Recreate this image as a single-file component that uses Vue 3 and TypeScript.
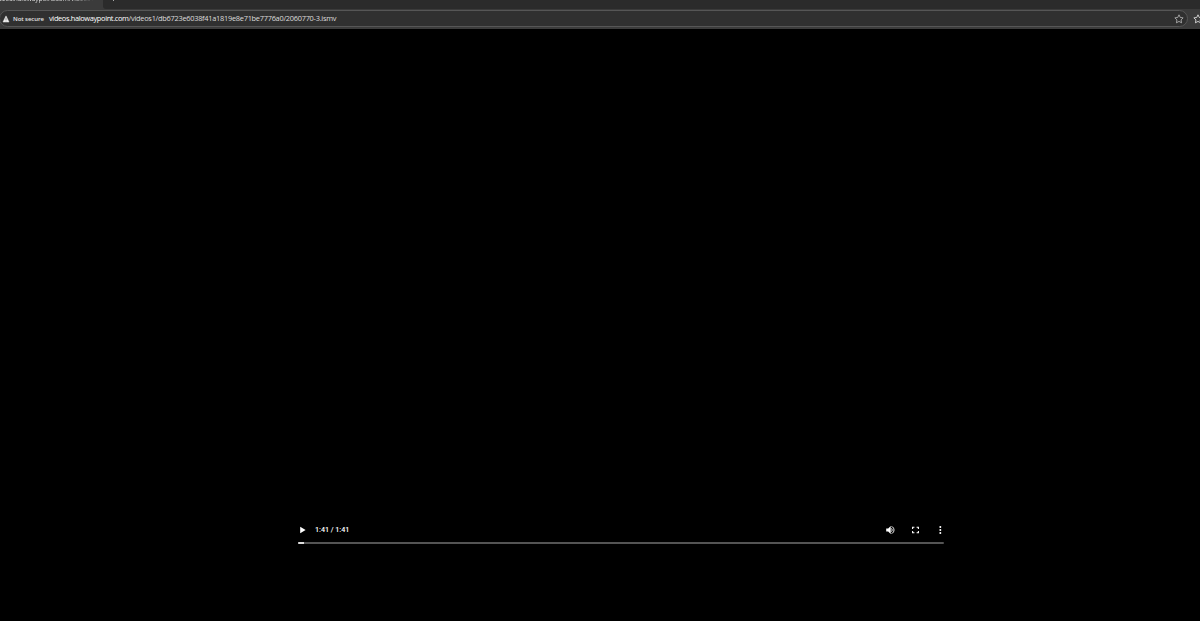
<script setup lang="ts">
const tabTitle = 'videos.halowaypoint.com/videos1'
const host = 'videos.halowaypoint.com'
const path = '/videos1/db6723e6038f41a1819e8e71be7776a0/2060770-3.ismv'
const time = '1:41 / 1:41'
const progress = 1
</script>

<template>
  <div class="window">
    <header class="tabs">
      <div class="tab"><span>{{ tabTitle }}</span></div>
      <div class="rest"><i class="plus"></i></div>
    </header>
    <div class="toolbar">
      <div class="address">
        <svg class="warn" viewBox="0 0 8 8"><path d="M4 .9 7 7H1Z" fill="#eee" stroke="#eee" stroke-width=".5" stroke-linejoin="round" /><path d="M4 3v2M4 5.7v.6" stroke="#555" stroke-width=".6" /></svg>
        <span class="secure">Not secure</span>
        <span class="url"><span class="host">{{ host }}</span>{{ path }}</span>
        <svg class="star" viewBox="0 0 10 10"><path d="m5 .8 1.25 2.65 2.9.4-2.1 2.05.5 2.9L5 7.4 2.45 8.8l.5-2.9L.85 3.85l2.9-.4Z" /></svg>
      </div>
      <svg class="favorites" viewBox="0 0 10 10"><path d="m5 .8 1.25 2.65 2.9.4-2.1 2.05.5 2.9L5 7.4 2.45 8.8l.5-2.9L.85 3.85l2.9-.4Z" /></svg>
    </div>
    <main class="stage">
      <section class="player">
        <div class="controls">
          <svg class="play" viewBox="0 0 6 8"><path d="M.2.8 5.6 4 .2 7.2Z" fill="#fff" /></svg>
          <span class="time">{{ time }}</span>
          <div class="actions">
            <svg viewBox="0 0 10 10"><path d="M1.2 3.5h2L5.7 1v8L3.2 6.5h-2Z" fill="#fff" /><path d="M6.5 3.3q1.5 1.7 0 3.4M6.5 1.5c3.3.8 3.3 6.2 0 7" fill="none" stroke="#fff" stroke-width=".9" /></svg>
            <svg viewBox="0 0 10 10"><path d="M2.6 4V2.2h1.8M6.6 2.2h1.8V4M8.4 6v1.8H6.6M4.4 7.8H2.6V6" fill="none" stroke="#fff" stroke-width="1.1" /></svg>
            <svg viewBox="0 0 10 10"><g fill="#fff"><circle cx="5.3" cy="2.1" r="1" /><circle cx="5.3" cy="5" r="1" /><circle cx="5.3" cy="7.9" r="1" /></g></svg>
          </div>
        </div>
        <div class="track"><div class="fill" :style="{ width: progress + '%' }"></div></div>
      </section>
    </main>
  </div>
</template>

<style>
body { background: #000; overflow: hidden; }
</style>
<style scoped>
.window { width: 1200px; height: 621px; display: flex; flex-direction: column; background: #000; font-family: "Open Sans", "Noto Sans", sans-serif; }
.tabs { height: 9px; display: flex; background: #3b3b3b; overflow: hidden; }
.tab { width: 103px; height: 9px; overflow: hidden; color: #ddd; font-size: 6.6px; line-height: 10px; white-space: nowrap; }
.tab span { display: block; width: 110px; margin: -6px 0 0 -7px; letter-spacing: -.1px; mask-image: linear-gradient(to right, #000 70%, transparent 92%); }
.rest { flex: 1; height: 9px; background: #2b2b2b; border-bottom-left-radius: 3px; }
.plus { display: block; width: 1px; height: 1px; margin-left: 10px; background: #aaa; }
.toolbar { height: 20px; box-sizing: border-box; display: flex; align-items: flex-start; padding-top: 1px; background: #3b3b3b; border-bottom: 1px solid #3b3b3b; overflow: hidden; }
.address { width: 1189px; height: 17px; flex: none; box-sizing: border-box; display: flex; align-items: center; margin-left: -1px; padding: 0 3px 0 2px; border: 1px solid #565656; border-radius: 9px; background: #303030; }
.warn { width: 8px; height: 8px; flex: none; margin: 0 3px 0 0; }
.secure { width: 36px; flex: none; color: #e4e4e4; font-size: 6px; font-weight: 600; line-height: 14px; letter-spacing: -.06px; white-space: nowrap; }
.url { color: #ddd; font-size: 7.4px; line-height: 13px; white-space: nowrap; letter-spacing: -.265px; }
.host { color: #fff; letter-spacing: -.34px; }
.star { width: 10px; height: 10px; margin: 0 0 0 auto; flex: none; }
.star path, .favorites path { fill: none; stroke: #bbb; stroke-width: .8; stroke-linejoin: round; }
.favorites { width: 10px; height: 10px; flex: none; margin: 4px 0 0 5px; }
.favorites path { stroke: #eee; }
.stage { flex: 1; display: flex; align-items: flex-end; justify-content: center; padding: 0 0 77px 42px; background: #000; }
.player { width: 646px; }
.controls { height: 12px; display: flex; align-items: center; padding-left: 2px; margin-bottom: 6px; }
.play { width: 6px; height: 8px; }
.time { margin-left: 9px; color: #fff; font-family: Roboto, sans-serif; font-size: 7.2px; font-weight: 500; line-height: 12px; white-space: nowrap; letter-spacing: -.03px; }
.actions { display: flex; gap: 15px; margin: 0 -1px 0 auto; }
.actions svg { width: 10px; height: 10px; }
.track { height: 2px; border-radius: 1px; background: #545454; overflow: hidden; }
.fill { height: 2px; background: #ddd; }
</style>
